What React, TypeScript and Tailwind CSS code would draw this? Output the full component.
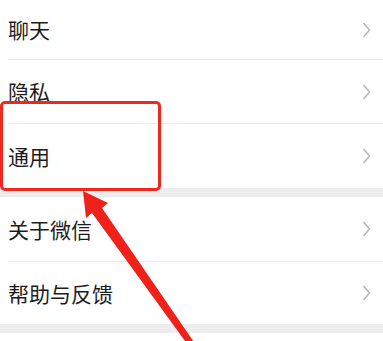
const items = [
	{ label: '聊天', h: 'h-[60px]', divider: true },
	{ label: '隐私', h: 'h-[64px]', divider: true },
	{ label: '通用', h: 'h-[64px]', divider: false },
]

const items2 = [
	{ label: '关于微信', h: 'h-[65px]', divider: true },
	{ label: '帮助与反馈', h: 'h-[62px]', divider: false },
]

const Chevron = () => (
	<svg width="9" height="16" viewBox="0 0 9 16" className="mr-[12px]">
		<path
			d="M1.5 1 L7.5 8 L1.5 15"
			fill="none"
			stroke="#b5b5b5"
			strokeWidth="1.4"
		/>
	</svg>
)

const Row = ({
	label,
	h,
	divider,
}: {
	label: string
	h: string
	divider: boolean
}) => (
	<div className="bg-white pl-2">
		<div
			className={`flex ${h} items-center justify-between ${divider ? 'border-b border-[#ececec]' : ''}`}
		>
			<span className="text-[21px] leading-none text-[#1c1c1c]">{label}</span>
			<Chevron />
		</div>
	</div>
)

export default function App() {
	return (
		<div
			className="relative h-[341px] w-[383px] overflow-hidden bg-white"
			style={{ fontFamily: '"Noto Sans CJK SC", "Noto Sans", sans-serif' }}
		>
			<div className="flex flex-col">
				{items.map((it) => (
					<Row key={it.label} {...it} />
				))}
				<div className="h-[9px] bg-[#ededed]" />
				{items2.map((it) => (
					<Row key={it.label} {...it} />
				))}
				<div className="h-[9px] bg-[#ededed]" />
				<div className="h-[20px] bg-white" />
			</div>

			{/* 赤枠 */}
			<div className="absolute left-0 top-[101px] h-[90px] w-[161px] rounded-[5px] border-[3px] border-[#f0271f]" />

			{/* 矢印 */}
			<svg
				className="absolute left-0 top-0"
				width="383"
				height="341"
				viewBox="0 0 383 341"
			>
				<polygon
					points="83,191 108,203 102,208 198,348 193,352 92,213 86,218"
					fill="#f0211a"
				/>
			</svg>
		</div>
	)
}
